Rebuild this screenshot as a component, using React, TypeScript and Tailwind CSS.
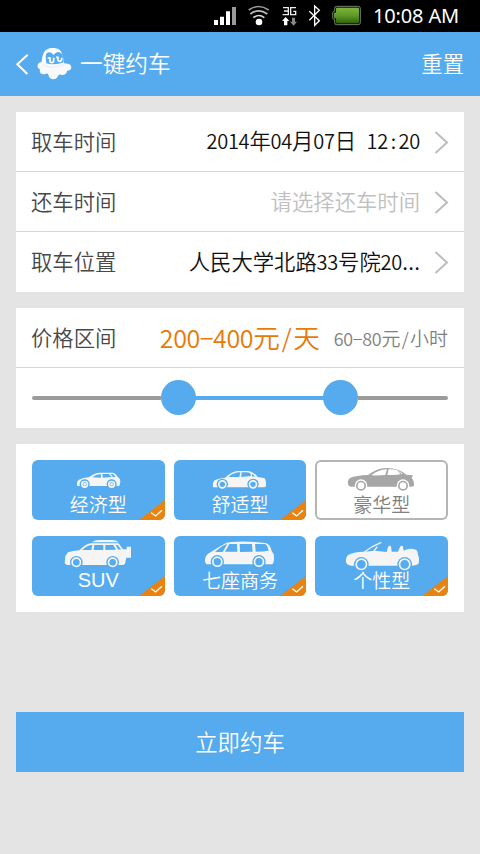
import React from 'react';

const cjk = "font-['Noto_Sans_CJK_SC',sans-serif]";

/* Latin characters take half of a full-width cell. */
function Mixed({ text }: { text: string }) {
  return (
    <>
      {Array.from(text).map((c, i) =>
        c.charCodeAt(0) > 255 ? (
          <span key={i}>{c}</span>
        ) : (
          <span
            key={i}
            className={
              c === '.'
                ? 'inline-flex w-[0.28em] justify-center whitespace-pre'
                : 'inline-flex w-[0.532em] justify-center whitespace-pre text-[0.94em]'
            }
          >
            {c === '-' ? '−' : c}
          </span>
        ),
      )}
    </>
  );
}

function StatusBar() {
  return (
    <div className="flex h-8 items-start bg-black pl-[214px]">
      <svg className="mt-[7px] h-[18px] w-[22px] shrink-0" viewBox="42 21 66 54">
        <path fill="#fff" d="M42 60h12v15H42zM60 50h12v25H60zM78 34h12v41H78z" />
        <path fill="#999" d="M96 21h12v54H96z" />
      </svg>
      <svg className="mt-[5px] ml-[11px] h-[21px] w-[23px] shrink-0" viewBox="141 15 69 63" fill="none" strokeWidth="5">
        <path stroke="#999" d="M146 30Q176 9 206 30" />
        <path stroke="#bbb" d="M151 42Q176 23 202 42" />
        <path stroke="#ddd" d="M160 53Q176 40 193 53" />
        <circle cx="177" cy="66" r="10" fill="#fff" />
      </svg>
      <svg className="mt-[6px] ml-[11px] h-[21px] w-[17px] shrink-0" viewBox="243 18 51 63">
        <path fill="none" stroke="#eee" strokeWidth="4" d="M249 23h16v21h-17M252 33h13M288 23h-16v21h15V34h-7" />
        <path fill="#fff" d="M257 51l11 12h-6v13h-10V63h-6z" />
        <path fill="#888" d="M276 53h9v12h6l-10 12-11-12h6z" />
      </svg>
      <svg className="mt-[4px] ml-[9px] h-[23px] w-[15px] shrink-0" viewBox="321 12 45 69" fill="none" stroke="#fff" strokeWidth="4">
        <path d="M328 34l30 28-14 14V18l14 13-30 30" />
      </svg>
      <svg className="mt-[5px] ml-[10px] h-[21px] w-[30px] shrink-0" viewBox="396 15 90 63">
        <defs>
          <linearGradient id="bat" x2="0" y2="1">
            <stop offset="0" stopColor="#7db63a" />
            <stop offset=".5" stopColor="#5f9a27" />
            <stop offset="1" stopColor="#2f620b" />
          </linearGradient>
        </defs>
        <path fill="#111" stroke="#8c9482" strokeWidth="2.5" d="M409 19h66q6 0 6 6v43q0 6-6 6h-66q-5 0-5-6v-9q-6-1-6-6V39q0-5 6-6v-8q0-6 5-6z" />
        <path fill="url(#bat)" d="M411 23h62q4 0 4 4v39q0 4-4 4h-62q-3 0-3-4v-11h-6V38h6V27q0-4 3-4z" />
      </svg>
      <span className="ml-[11px] whitespace-nowrap font-['Noto_Sans',sans-serif] text-[20px] font-normal leading-8 tracking-[-0.15px] text-white">10:08 AM</span>
    </div>
  );
}

function Header() {
  return (
    <div className="flex h-16 items-center bg-[#55abee] pl-[15px] pr-4 text-white">
      <svg className="h-[22px] w-[14px] shrink-0" viewBox="45 159 42 66" fill="none" stroke="#fff" strokeWidth="6">
        <path d="M83 164L52 193l30 29" />
      </svg>
      <svg className="ml-2 h-[34px] w-[36px] shrink-0" viewBox="111 141 108 102">
        <path fill="#fff" d="M125 196q-1-22 6-37 8-15 26-15 20-1 27 12 7 17 9 38z" />
        <path fill="#f7f9fb" d="M126 186q-10 0-13 9-2 10 7 13-3 11 6 14 6 2 12-1 5-1 7 3 3 13 14 14 12 0 16-12 3-4 8-2 6 3 12-1 6-4 6-11 12 0 13-9 0-10-11-12-5-1-11-1z" />
        <path fill="#55abee" d="M137 172q0-13 9-15 9-1 15 8 5-9 14-9 11 1 14 15l2 16q-14 6-32 6-13 0-20-3z" />
        <path fill="none" stroke="#fff" strokeWidth="5" d="M143 174h7v9q0 5 5 5t6-5v-10M168 172h6v8q1 4 5 4t6-5v-6" />
        <path fill="none" stroke="#dce8f2" strokeWidth="2" d="M130 194q14 10 40 6 12-1 22-6" />
      </svg>
      <span className="-mt-[2px] ml-[7px] text-[22.67px] leading-8">一键约车</span>
      <span className="-mt-0.5 ml-auto text-[21.33px] leading-8">重置</span>
    </div>
  );
}

function Row({ label, value, muted, last }: { label: string; value: string; muted?: boolean; last?: boolean }) {
  return (
    <div className={last ? 'flex h-[60px] items-center pl-[15px] pr-[15px]' : 'flex h-[60px] items-center border-b border-[#d6d6d6] pl-[15px] pr-[15px]'}>
      <span className="-mt-0.5 text-[21.33px] leading-8 text-[#484848]">{label}</span>
      <span className={muted ? '-mt-0.5 ml-auto whitespace-nowrap text-[21.33px] leading-8 text-[#c0c0c0]' : '-mt-0.5 ml-auto whitespace-nowrap text-[21.33px] leading-8 text-[#111]'}>
        <Mixed text={value} />
      </span>
      <svg className="ml-[14px] h-6 w-[15px] shrink-0" viewBox="0 0 15 24" fill="none" stroke="#bcbcbc" strokeWidth="2">
        <path d="M1.5 2L13 12.5 1.5 23" />
      </svg>
    </div>
  );
}

const wheel = (x: number, y: number, r: number, body: string, bg: string) => (
  <g>
    <circle cx={x} cy={y} r={r + 4} fill={bg} />
    <circle cx={x} cy={y} r={r - 2.5} fill={bg} stroke={body} strokeWidth="5" />
  </g>
);

const W = '#f5f5f5';
const B = '#55abee';
const G = '#a6a6a6';

function Economy() {
  return (
    <svg viewBox="21 30 398 108" className="h-9 w-full">
      <path fill={W} d="M156 107q-2-13 6-18 12-6 29-7 17-14 34-14h38q10 2 16 14 7 3 7 15l-3 11H164z" />
      <path fill={B} d="M202 82q11-9 25-10l1 11zM232 72h20l8 9-26 2zM257 72h7l8 9-8 1z" />
      {wheel(179, 103, 11, W, B)}
      {wheel(260, 103, 11, W, B)}
      <circle cx="179" cy="103" r="4" fill={W} />
      <circle cx="260" cy="103" r="4" fill={W} />
    </svg>
  );
}

function Comfort() {
  return (
    <svg viewBox="18 30 398 108" className="h-9 w-full">
      <path fill={W} d="M135 112q-2-16 5-21 11-6 32-8 20-20 38-20h28q18 1 31 18l19 3q7 2 6 25l-5 3z" />
      <path fill={B} d="M181 81q14-14 36-14l-3 14zM221 67h14q7 0 12 3l2 8-29 3zM251 71q6 3 10 8l-8 1z" />
      {wheel(163, 103, 13, W, B)}
      {wheel(255, 103, 13, W, B)}
    </svg>
  );
}

function Luxury() {
  return (
    <svg viewBox="15 30 398 108" className="h-9 w-full">
      <path fill={G} d="M115 106q-4-16 5-22 18-8 54-9 28-21 54-21 36-1 61 20l20 2-4 9q8 7 7 23l-8 2H122z" />
      <path fill="#fff" d="M184 76q20-17 47-18l-5 17q-20 2-42 1zM236 58q28-1 42 13-17 5-46 4z" />
      <path fill="none" stroke={G} strokeWidth="3" d="M264 60l10 14" />
      {wheel(153, 107, 15, G, '#fff')}
      {wheel(279, 107, 15, G, '#fff')}
    </svg>
  );
}

function Suv() {
  return (
    <svg viewBox="21 18 398 108" className="h-9 w-full">
      <path fill={W} d="M119 100l2-22 8-11q14-5 34-6 20-21 36-21h82l13 18h11v-8h13v33h-14l-4 18-5 4H126z" />
      <path fill={W} d="M200 37q10-7 22-7h38q14 0 22 7z" />
      <path fill={B} d="M172 60q15-15 30-15l-3 15zM208 45h27v15h-29zM241 45h24l8 14-32 1zM272 45h6l10 13-8 1z" />
      {wheel(154, 97, 15, W, B)}
      {wheel(263, 97, 15, W, B)}
    </svg>
  );
}

function Van() {
  return (
    <svg viewBox="18 18 398 108" className="h-9 w-full">
      <path fill={W} d="M111 96q-2-15 8-24 34-22 57-34 12-3 33-3 46-1 84 4 14 3 19 27 7 4 6 22-1 14-6 15H115z" />
      <path fill={B} d="M141 66q24-22 37-24l-14 24zM171 65l13-23h23l1 23zM215 42h37l2 23-38 1zM261 42h30q7 2 11 20-16 3-39 3z" />
      {wheel(148, 95, 16, W, B)}
      {wheel(273, 95, 16, W, B)}
    </svg>
  );
}

function Convertible() {
  return (
    <svg viewBox="15 18 398 108" className="h-9 w-full">
      <path fill={W} d="M108 96q-2-15 8-22 16-9 48-9l30-3 36 4 4-14q3-7 9-3l2 16h19l6-14q4-6 9-2l2 13 10-4q14-4 26 1 6 2 7 16 6 12 1 27-8 5-20 5H124q-14-2-16-11z" />
      <path fill="none" stroke={W} strokeWidth="4" d="M160 68q24-19 54-31M192 63l10-13" />
      {wheel(154, 103, 18, W, B)}
      {wheel(284, 103, 18, W, B)}
    </svg>
  );
}

function Tile({ label, off, latin, children }: { label: string; off?: boolean; latin?: boolean; children: React.ReactNode }) {
  return (
    <div
      className={
        off
          ? 'relative h-[60px] overflow-hidden rounded-[6px] bg-white text-[#808080] ring-2 ring-inset ring-[#b5b5b5]'
          : 'relative h-[60px] overflow-hidden rounded-[6px] bg-[#55abee] text-white'
      }
    >
      {children}
      <div className={latin ? "text-center font-['Liberation_Sans',sans-serif] text-[20px] leading-[17px]" : 'text-center text-[19px] leading-4'}>{label}</div>
      {!off && (
        <svg className="absolute right-0 bottom-0 h-5 w-[26px]" viewBox="0 0 78 60">
          <path fill="#e8830f" d="M0 60L78 0v60z" />
          <path fill="none" stroke="#fff" strokeWidth="4" d="M37 38l13 10 19-17" />
        </svg>
      )}
    </div>
  );
}

export default function App() {
  return (
    <div className={`h-[854px] w-[480px] overflow-hidden bg-[#e4e4e4] ${cjk} font-[350]`}>
      <StatusBar />
      <Header />
      <div className="flex flex-col gap-4 px-4 pt-4">
        <section className="bg-white">
          <Row label="取车时间" value="2014年04月07日 12:20" />
          <Row label="还车时间" value="请选择还车时间" muted />
          <Row label="取车位置" value="人民大学北路33号院20..." last />
        </section>

        <section className="bg-white">
          <div className="flex h-[60px] items-center whitespace-nowrap border-b border-[#d6d6d6] pl-[15px] pr-4">
            <span className="-mt-0.5 text-[21.33px] leading-8 text-[#484848]">价格区间</span>
            <span className="-mt-0.5 ml-auto text-[26.67px] leading-8 text-[#e8790a]">
              <Mixed text="200-400元/天" />
            </span>
            <span className="ml-[14px] text-[19px] leading-8 text-[#808080]">
              <Mixed text="60-80元/小时" />
            </span>
          </div>
          <div className="flex h-[59px] items-center px-4">
            <div className="h-1 w-[129px] rounded-l-full bg-[#9b9b9b]" />
            <div className="size-[35px] shrink-0 rounded-full bg-[#55abee]" />
            <div className="-mx-px h-1 w-[129px] bg-[#55abee]" />
            <div className="size-[35px] shrink-0 rounded-full bg-[#55abee]" />
            <div className="h-1 flex-1 rounded-r-full bg-[#9b9b9b]" />
          </div>
          <div className="h-px" />
        </section>

        <section className="grid grid-cols-3 gap-x-[9px] gap-y-4 bg-white p-4">
          <Tile label="经济型"><Economy /></Tile>
          <Tile label="舒适型"><Comfort /></Tile>
          <Tile label="豪华型" off><Luxury /></Tile>
          <Tile label="SUV" latin><Suv /></Tile>
          <Tile label="七座商务"><Van /></Tile>
          <Tile label="个性型"><Convertible /></Tile>
        </section>
      </div>
      <div className="px-4 pt-[100px]">
        <button className="block h-[60px] w-full bg-[#55abee] text-[22.4px] text-white">立即约车</button>
      </div>
    </div>
  );
}
